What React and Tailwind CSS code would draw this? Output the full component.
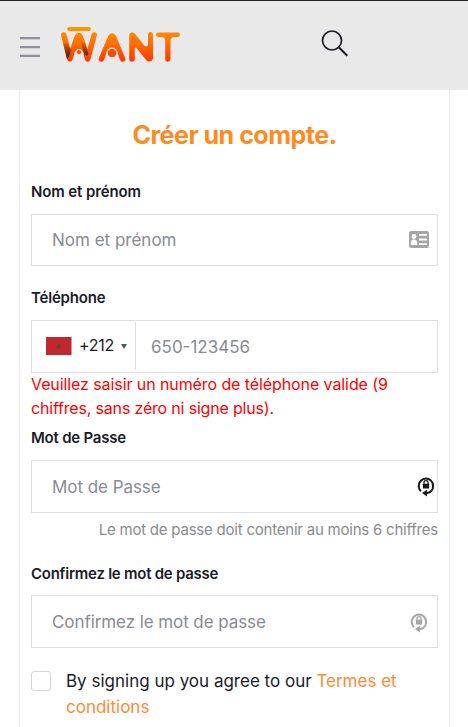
import { useState } from 'react';

export default function App() {
  const [accepted, setAccepted] = useState(false);

  return (
    <div className="h-[727px] overflow-hidden bg-white font-['Inter','Liberation_Sans',sans-serif] text-[#1b1b28]">
      <Header />
      <main className="ml-[19px] w-[431px] h-[637px] border-x border-[#ebebeb] px-[11px] pt-[29px]">
        <h1 className="h-8 leading-8 text-center text-[25px] font-bold tracking-[-0.48px] text-[#ff8a1f]">
          Créer un compte.
        </h1>

        <form className="pt-[30px]">
          <Label className="tracking-[-0.12px]">Nom et prénom</Label>
          <div className="mt-[11px] flex h-[52px] items-center border border-[#dddfe3] pl-5 pr-2">
            <input
              className="min-w-0 flex-1 pt-[2px] text-[17px] outline-none placeholder:text-[#898b92]"
              placeholder="Nom et prénom"
            />
            <CardIcon />
          </div>

          <Label className="mt-[21px] tracking-[-0.2px]">Téléphone</Label>
          <div className="mt-[11px] flex h-[53px] items-start border border-[#dddfe3]">
            <button type="button" className="mt-[1px] flex h-[48px] w-[104px] items-center border-r border-[#dddfe3] pl-[14px]">
              <Flag />
              <span className="-mt-[2px] ml-[7px] w-[35px] whitespace-nowrap text-[16px] tracking-[-0.3px]">+212</span>
              <svg className="ml-[7px]" width="6" height="5" viewBox="0 0 6 5">
                <path d="M0 0h6L3 5z" fill="#555" />
              </svg>
            </button>
            <input
              className="ml-[15px] h-[51px] min-w-0 flex-1 text-[17px] outline-none placeholder:text-[#898b92]"
              placeholder="650-123456"
            />
          </div>
          <p className="-mt-px whitespace-nowrap text-[16px] leading-6 text-[#ff0000]">
            <span className="tracking-[-0.09px]">Veuillez saisir un numéro de téléphone valide (9</span>
            <br />
            <span className="tracking-[-0.18px]">chiffres, sans zéro ni signe plus).</span>
          </p>

          <Label className="mt-[7px] tracking-[-0.22px]">Mot de Passe</Label>
          <div className="mt-[11px] flex h-[53px] items-center border border-[#dddfe3] pl-5 pr-[2px]">
            <input
              type="password"
              className="min-w-0 flex-1 pt-[2px] text-[17px] tracking-[-0.05px] outline-none placeholder:text-[#898b92]"
              placeholder="Mot de Passe"
            />
            <LockIcon color="#171717" className="-mt-[2px]" />
          </div>
          <p className="mt-[6px] h-[22px] whitespace-nowrap text-right text-[15px] leading-[22px] tracking-[-0.22px] text-[#898b8e]">
            Le mot de passe doit contenir au moins 6 chiffres
          </p>

          <Label className="mt-[22px] tracking-[-0.25px]">Confirmez le mot de passe</Label>
          <div className="mt-[10px] flex h-[53px] items-center border border-[#dddfe3] pl-5 pr-[9px]">
            <input
              type="password"
              className="min-w-0 flex-1 pt-[2px] text-[17px] tracking-[-0.08px] outline-none placeholder:text-[#898b92]"
              placeholder="Confirmez le mot de passe"
            />
            <LockIcon color="#a5a5a5" />
          </div>

          <label className="mt-5 flex items-start">
            <input
              type="checkbox"
              checked={accepted}
              onChange={() => setAccepted(!accepted)}
              className="mt-[3px] h-5 w-5 appearance-none rounded-[3px] border border-[#d1d4e1] checked:bg-[#ff8a1f]"
            />
            <span className="ml-[15px] whitespace-nowrap text-[17px] leading-[26px]">
              By signing up you agree to our <a className="text-[#ff8a33]">Termes et<br />conditions</a>
            </span>
          </label>
        </form>
      </main>
    </div>
  );
}

function Header() {
  return (
    <header className="flex h-[90px] items-start border-t border-[#231f25] bg-[#e9e9e9] pl-5">
      <button className="mt-9 flex w-5 flex-col gap-[7px]">
        <span className="h-[2px] w-5 bg-[#91909a] shadow-[0_1px_0_#cfced2]" />
        <span className="h-[2px] w-5 bg-[#91909a] shadow-[0_1px_0_#cfced2]" />
        <span className="h-[2px] w-5 bg-[#91909a] shadow-[0_-1px_0_#cfced2]" />
      </button>
      <Logo />
      <svg className="ml-[138px] mt-[28px]" width="29" height="29" viewBox="0 0 29 29" fill="none" stroke="#1b1b28" strokeWidth="1.7">
        <circle cx="12" cy="11.500" r="9.500" />
        <path d="M18.800 18.300L27.300 26.800" strokeWidth="2" />
      </svg>
    </header>
  );
}

function Label({ children, className = '' }) {
  return (
    <div className={`h-[22px] whitespace-nowrap text-[15px] font-semibold leading-[22px] ${className}`}>
      {children}
    </div>
  );
}

function Logo() {
  return (
    <svg className="ml-5 mt-[25px]" width="122" height="38" viewBox="60 26 122 38" fill="none" strokeLinecap="round" strokeLinejoin="round">
      <defs>
        <linearGradient id="fire" gradientUnits="userSpaceOnUse" x1="0" y1="27" x2="0" y2="62">
          <stop offset="0" stopColor="#ff9900" />
          <stop offset="0.45" stopColor="#ff7000" />
          <stop offset="1" stopColor="#ff3600" />
        </linearGradient>
        <linearGradient id="shade" gradientUnits="userSpaceOnUse" x1="0" y1="41" x2="0" y2="55">
          <stop offset="0" stopColor="#64270b" stopOpacity="0" />
          <stop offset="1" stopColor="#64270b" />
        </linearGradient>
      </defs>
      <path d="M69.300 29H88.800" stroke="url(#fire)" strokeWidth="4.200" />
      <path d="M77 39Q78.800 35 80.600 39L85 52H72.600Z" fill="url(#fire)" />
      <g stroke="url(#fire)" strokeWidth="5.500">
        <path d="M63.800 35L69.800 58.800L76.800 38Q78.800 33 80.800 38L87.700 58.800L94.200 35" />
        <path d="M101.400 59L110.500 37.500Q112.100 34.500 113.700 37.500L122.600 59" />
      </g>
      <path d="M110.500 37.500H113.700L119 52H105Z" fill="url(#fire)" />
      <path d="M129.200 59V35.500Q129.200 32 133 32.500L134.800 33.500L144.200 45.600Q148 48.500 148 43V35Q148 32 150.500 32Q153 32 153 35V58.500Q152 62 148.500 61.500L146.500 60.500L136.800 48.300Q135 46.500 134.800 49V59Q134.500 61.800 132 61.800Q129.200 61.800 129.200 59Z" fill="url(#fire)" />
      <path d="M158 32.500H178Q180 33 180 34.800Q180 36.800 178 37H173.500Q170.500 37.500 170.500 41V59Q170 61.800 167.800 61.800Q165.200 61.800 165.200 59V41Q165.200 37.500 162 37H158Q156 36.800 156 34.800Q156 33 158 32.500Z" fill="url(#fire)" />
      <path d="M63.200 44L67.500 42L71.300 50L69 57L67 59Z" fill="url(#shade)" />
      <path d="M81 42L85 42L88.500 54L86.500 56L83.500 53Z" fill="url(#shade)" />
      <path d="M74.200 54.500Q75 49 79 49Q83 49 83.800 54.500Z" fill="#e9e9e9" />
      <circle cx="79" cy="52.200" r="2.100" fill="#ff5500" />
      <path d="M105.700 55.500Q106.500 47.500 112 47.500Q117.500 47.500 118.300 55.500Z" fill="#e9e9e9" />
      <circle cx="112" cy="53" r="4.300" fill="#ff4b00" />
    </svg>
  );
}

function Flag() {
  return (
    <svg width="26" height="18" viewBox="0 0 26 18">
      <path d="M0 0h25.500v18H0z" fill="#c1272d" />
      <path d="M12.500 6l.8 2.200h2.200l-1.800 1.300.7 2.300-1.900-1.400-1.900 1.400.7-2.300-1.800-1.300h2.200z" fill="#574b2b" />
    </svg>
  );
}

function CardIcon() {
  return (
    <svg className="-mt-[1px]" width="20" height="17" viewBox="0 0 20 17">
      <rect width="20" height="17" rx="2.200" fill="#a5a5a5" />
      <g fill="#fff">
        <circle cx="5" cy="5.500" r="2.400" />
        <path d="M1.800 14v-2.500Q2.200 9 4 8.500h2Q7.900 9 8.200 11.500V14z" />
        <path d="M10 3h8v1.700h-8zM10 7.500h8v2h-8zM10 12.300h8V14h-8z" />
      </g>
    </svg>
  );
}

function LockIcon({ color, className = '' }) {
  return (
    <svg className={className} width="18" height="22" viewBox="0 0 18 22" fill="none">
      <path d="M3.900 16.300A7.200 7.500 0 1 1 14.100 16.200Q12.500 17.900 9.500 18" stroke={color} strokeWidth="2" />
      <path d="M5 18L10 14.800V21.500Z" fill={color} />
      <path d="M7 9V7.200Q7 5.700 9 5.700Q11 5.700 11 7.200V9" stroke={color} strokeWidth="1.300" />
      <rect x="5.900" y="8.700" width="6.200" height="4.800" rx="0.500" fill={color} />
    </svg>
  );
}
